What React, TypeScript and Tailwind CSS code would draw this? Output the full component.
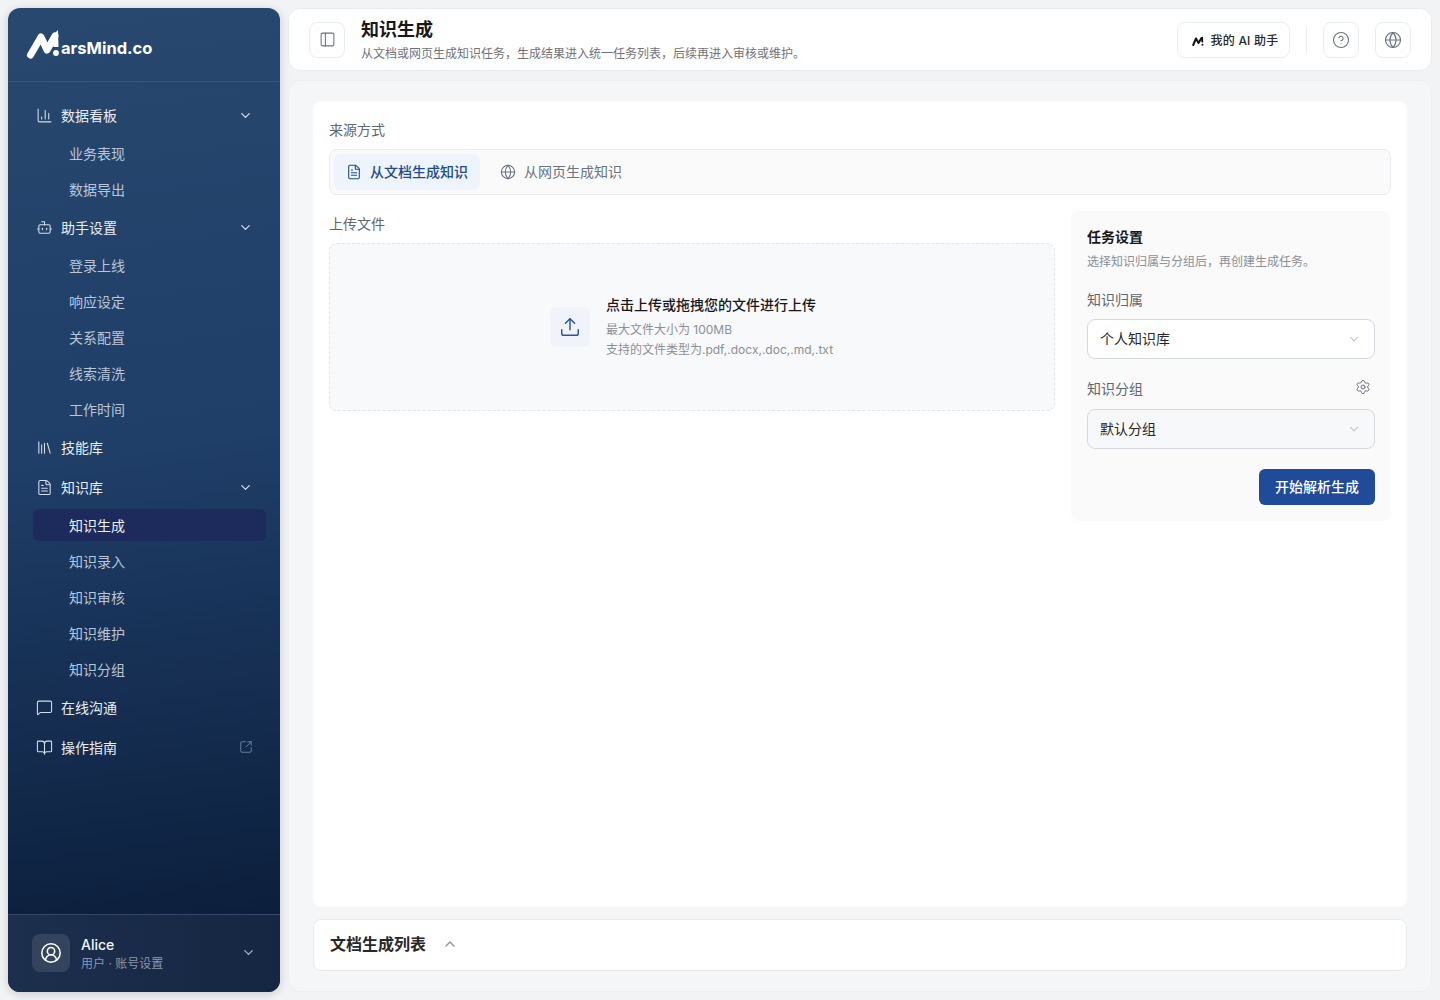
import {
  BookOpen,
  Bot,
  ChartColumn,
  ChevronDown,
  ChevronUp,
  CircleHelp,
  CircleUserRound,
  FileText,
  Globe,
  Library,
  MessageSquare,
  PanelLeft,
  Settings,
  SquareArrowOutUpRight,
  Upload,
} from "lucide-react";
import type { ReactNode } from "react";

const font = "font-['Inter','Noto_Sans_CJK_SC',sans-serif]";

function Group({ icon, label, open }: { icon: ReactNode; label: string; open?: boolean }) {
  return (
    <div className="flex h-[40px] items-center pl-[28px] pr-[27px] text-[14px] font-normal text-[#e8edf4]">
      <span className="flex w-[25px] shrink-0 items-center text-[#d5deea]">{icon}</span>
      <span className="flex-1">{label}</span>
      {open && <ChevronDown className="mt-[1px] size-[15px] text-[#d5deea]" strokeWidth={2} />}
    </div>
  );
}

function Sub({ label, active }: { label: string; active?: boolean }) {
  return (
    <div
      className={`ml-[25px] mr-[14px] flex h-[32px] items-center rounded-[6px] pl-[36px] text-[14px] ${
        active ? "bg-[#1d2a5c] text-[#eef2f7]" : "text-[#b8c6d8]"
      }`}
    >
      {label}
    </div>
  );
}

function Sidebar() {
  return (
    <aside className="flex w-[272px] shrink-0 flex-col overflow-hidden rounded-[12px] bg-[linear-gradient(172deg,#28486f_0%,#1f3e68_45%,#0c1f3c_92%)] shadow-[0_2px_10px_rgba(15,23,42,0.18)]">
      <div className="flex h-[74px] shrink-0 items-center border-b border-[#35547c] pl-[16px]">
        <svg width="36" height="32" viewBox="24 29 36 32">
          <path
            d="M30.5 55 L41 37 L47 50 L55 36"
            fill="none"
            stroke="#fff"
            strokeWidth="7"
            strokeLinecap="round"
            strokeLinejoin="round"
          />
          <path d="M52 36 L58 30 L58.5 47 L53.5 47 Z" fill="#fff" />
          <circle cx="56" cy="53" r="2.9" fill="#fff" />
        </svg>
        <span className="ml-[1px] mt-[8px] text-[16.5px] font-bold text-white">arsMind.co</span>
      </div>

      <nav className="flex flex-1 flex-col pt-[13px]">
        <Group icon={<ChartColumn className="size-[17px]" strokeWidth={1.5} />} label="数据看板" open />
        <div className="flex flex-col gap-[4px] py-[2px]">
          <Sub label="业务表现" />
          <Sub label="数据导出" />
        </div>
        <Group icon={<Bot className="size-[17px]" strokeWidth={1.5} />} label="助手设置" open />
        <div className="flex flex-col gap-[4px] py-[2px]">
          <Sub label="登录上线" />
          <Sub label="响应设定" />
          <Sub label="关系配置" />
          <Sub label="线索清洗" />
          <Sub label="工作时间" />
        </div>
        <Group icon={<Library className="size-[17px]" strokeWidth={1.5} />} label="技能库" />
        <Group icon={<FileText className="size-[17px]" strokeWidth={1.5} />} label="知识库" open />
        <div className="flex flex-col gap-[4px] py-[2px]">
          <Sub label="知识生成" active />
          <Sub label="知识录入" />
          <Sub label="知识审核" />
          <Sub label="知识维护" />
          <Sub label="知识分组" />
        </div>
        <Group icon={<MessageSquare className="size-[17px]" strokeWidth={1.5} />} label="在线沟通" />
        <div className="relative">
          <Group icon={<BookOpen className="size-[17px]" strokeWidth={1.5} />} label="操作指南" />
          <SquareArrowOutUpRight
            className="absolute right-[27px] top-[13px] size-[14px] text-[#6f88a8]"
            strokeWidth={1.5}
          />
        </div>
      </nav>

      <div className="flex h-[78px] shrink-0 items-center border-t border-[#33486a] bg-gradient-to-r from-[#1c2f4d] to-[#152642] px-[24px]">
        <div className="mb-[2px] flex size-[38px] items-center justify-center rounded-[8px] bg-[#34445f]">
          <CircleUserRound className="size-[22px] text-white" strokeWidth={1.7} />
        </div>
        <div className="ml-[11px] flex-1 pt-[1px]">
          <div className="text-[14px] font-medium leading-[18px] text-[#f1f5f9]">Alice</div>
          <div className="mt-[1px] text-[12px] leading-[18px] text-[#8797ae]">用户 · 账号设置</div>
        </div>
        <ChevronDown className="mb-[2px] size-[15px] text-[#aab7c8]" strokeWidth={2} />
      </div>
    </aside>
  );
}

function HeaderButton({ children }: { children: ReactNode }) {
  return (
    <button className="flex size-[36px] items-center justify-center rounded-[8px] border border-[#eaedf0] bg-white text-[#6b7280]">
      {children}
    </button>
  );
}

function Select({ value, muted }: { value: string; muted?: boolean }) {
  return (
    <div
      className={`flex h-[40px] items-center justify-between rounded-[8px] border border-[#d5d9df] pl-[12px] pr-[13px] text-[14px] text-[#27272a] ${
        muted ? "bg-[#f7f8fa]" : "bg-white"
      }`}
    >
      <span className="pb-[2px]">{value}</span>
      <ChevronDown className="size-[14px] text-[#b3b9c2]" strokeWidth={1.8} />
    </div>
  );
}

export default function App() {
  return (
    <div className={`${font} flex h-[1000px] w-[1440px] gap-[8px] overflow-hidden bg-[#f1f3f5] p-[8px]`}>
      <Sidebar />
      <div className="flex min-w-0 flex-1 flex-col gap-[9px]">
        <header className="flex h-[63px] shrink-0 items-center rounded-[12px] border border-[#e9ecef] bg-white px-[20px]">
          <HeaderButton>
            <PanelLeft className="size-[17px]" strokeWidth={1.5} />
          </HeaderButton>
          <div className="ml-[16px] flex-1 pt-[1px]">
            <div className="text-[18px] font-semibold leading-[26px] text-[#18181b]">知识生成</div>
            <div className="mt-[1px] text-[12px] leading-[20px] text-[#71717a]">
              从文档或网页生成知识任务，生成结果进入统一任务列表，后续再进入审核或维护。
            </div>
          </div>
          <button className="flex h-[36px] w-[113px] items-center justify-center gap-[5px] rounded-[8px] border border-[#eaedf0] bg-white pl-[3px] pt-[2px] text-[12px] font-medium tracking-[0.2px] text-[#27272a]">
            <svg width="14" height="10" viewBox="0 0 14 10">
              <path
                d="M1.2 9 L4 2.5 L6.5 7 L9.5 2"
                fill="none"
                stroke="#111"
                strokeWidth="2"
                strokeLinecap="round"
                strokeLinejoin="round"
              />
              <path d="M9 2 L11 0.5 L11.2 6.5 L9.5 6.5 Z" fill="#111" />
              <circle cx="10.5" cy="8.8" r="1" fill="#111" />
            </svg>
            我的 AI 助手
          </button>
          <div className="mx-[16px] h-[24px] w-px bg-[#e9ecef]" />
          <HeaderButton>
            <CircleHelp className="size-[18px]" strokeWidth={1.5} />
          </HeaderButton>
          <div className="w-[16px]" />
          <HeaderButton>
            <Globe className="size-[18px]" strokeWidth={1.5} />
          </HeaderButton>
        </header>

        <main className="flex min-h-0 flex-1 flex-col gap-[12px] rounded-[12px] border border-[#eceef1] bg-[#f5f6f8] px-[24px] pb-[20px] pt-[20px]">
          <section className="min-h-0 flex-1 rounded-[8px] bg-white px-[16px] pt-[18px]">
            <div className="text-[14px] leading-[22px] text-[#5f6670]">来源方式</div>
            <div className="mt-[8px] flex h-[46px] items-center gap-[8px] rounded-[8px] border border-[#e8eaee] bg-[#fafafb] px-[4px]">
              <div className="flex h-[36px] items-center gap-[8px] rounded-[6px] bg-[#eef4fb] px-[12px] pb-[1px] text-[14px] font-medium text-[#1f4a8c]">
                <FileText className="size-[16px]" strokeWidth={1.6} />
                从文档生成知识
              </div>
              <div className="flex h-[36px] items-center gap-[8px] px-[12px] pb-[1px] text-[14px] text-[#6b7280]">
                <Globe className="size-[16px]" strokeWidth={1.6} />
                从网页生成知识
              </div>
            </div>

            <div className="mt-[16px] flex gap-[16px]">
              <div className="flex-1">
                <div className="mt-[2px] text-[14px] leading-[22px] text-[#5f6670]">上传文件</div>
                <div className="mt-[8px] flex h-[168px] items-center justify-center rounded-[8px] border border-dashed border-[#e2e5ea] bg-[#f8f9fb] pr-[1px]">
                  <div className="flex size-[40px] items-center justify-center rounded-[6px] bg-[#f0f4fa] text-[#2a5596]">
                    <Upload className="size-[22px]" strokeWidth={1.6} />
                  </div>
                  <div className="ml-[16px]">
                    <div className="-mt-[1px] text-[14px] font-medium leading-[22px] text-[#18181b]">
                      点击上传或拖拽您的文件进行上传
                    </div>
                    <div className="mt-[4px] text-[12px] leading-[20px] text-[#8a8f98]">最大文件大小为 100MB</div>
                    <div className="text-[12px] leading-[20px] text-[#8a8f98]">
                      支持的文件类型为.pdf,.docx,.doc,.md,.txt
                    </div>
                  </div>
                </div>
              </div>

              <div className="w-[320px] shrink-0 rounded-[8px] bg-[#fafafb] p-[16px] pt-[15px]">
                <div className="text-[14px] font-semibold leading-[22px] text-[#18181b]">任务设置</div>
                <div className="mt-[4px] text-[12px] leading-[20px] text-[#8a8f98]">
                  选择知识归属与分组后，再创建生成任务。
                </div>
                <div className="mt-[17px] text-[14px] leading-[22px] text-[#5f6670]">知识归属</div>
                <div className="mt-[8px]">
                  <Select value="个人知识库" />
                </div>
                <div className="mt-[19px] flex items-center justify-between pr-[4px] text-[14px] leading-[22px] text-[#5f6670]">
                  知识分组
                  <Settings className="mb-[4px] size-[16px] text-[#6b7280]" strokeWidth={1.5} />
                </div>
                <div className="mt-[9px]">
                  <Select value="默认分组" muted />
                </div>
                <div className="mt-[20px] flex justify-end">
                  <button className="h-[36px] w-[116px] rounded-[6px] bg-[#1f4b99] pb-[2px] text-[14px] font-medium text-white">
                    开始解析生成
                  </button>
                </div>
              </div>
            </div>
          </section>

          <section className="flex h-[52px] shrink-0 items-center gap-[16px] rounded-[8px] border border-[#e8eaee] bg-white pb-[2px] pl-[16px]">
            <span className="text-[16px] font-semibold text-[#27272a]">文档生成列表</span>
            <ChevronUp className="size-[16px] text-[#8a8f98]" strokeWidth={2} />
          </section>
        </main>
      </div>
    </div>
  );
}
